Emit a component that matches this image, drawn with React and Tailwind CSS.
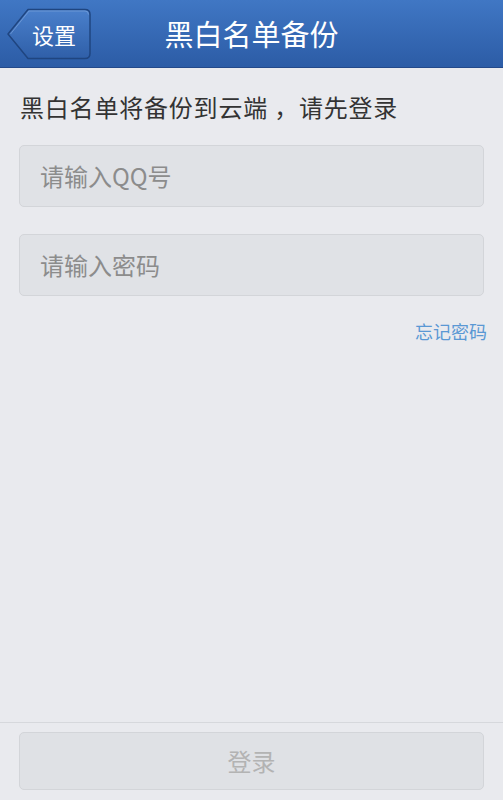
import React from "react";

const font = { fontFamily: '"Noto Sans CJK SC", "Noto Sans", "Liberation Sans", sans-serif' };

export default function App() {
  return (
    <div className="w-[503px] h-[800px] flex flex-col bg-[#e9eaee] overflow-hidden" style={font}>
      <div className="h-[68px] shrink-0 flex items-center relative bg-gradient-to-b from-[#4077c4] to-[#2c5ca6] border-b border-[#23498a]">
        <button className="relative ml-[6px] w-[86px] h-[54px] flex items-center justify-center">
          <svg className="absolute inset-0" width="86" height="54" viewBox="0 0 86 54">
            <defs>
              <linearGradient id="bb" x1="0" y1="0" x2="0" y2="1">
                <stop offset="0" stopColor="#4a80cc" />
                <stop offset="1" stopColor="#2f5fa8" />
              </linearGradient>
            </defs>
            <path d="M2 27 L22 2.5 H79 Q84 2.5 84 7.5 V46.5 Q84 51.5 79 51.5 H22 Z" fill="url(#bb)" stroke="#1f4580" strokeWidth="1.5" strokeLinejoin="round" />
            <path d="M4.5 27 L23 4 H79 Q82.5 4 82.5 7.5" fill="none" stroke="#7aa3dc" strokeWidth="1" opacity="0.7" />
          </svg>
          <span className="relative text-white text-[22px] ml-[10px] leading-none">设置</span>
        </button>
        <div className="absolute inset-0 flex items-center justify-center pointer-events-none">
          <span className="text-white text-[29px] leading-none">黑白名单备份</span>
        </div>
      </div>
      <div className="flex-1 flex flex-col px-[19px]">
        <div className="mt-[27px] text-[24px] leading-none tracking-[0.8px] text-[#333] pl-[1px] whitespace-nowrap">黑白名单将备份到云端 ，请先登录</div>
        <div className="mt-[26px] h-[62px] rounded-[5px] bg-[#e0e2e6] border border-[#d3d5d9] flex items-center pl-[20px] text-[24px] text-[#8c8c8c]">请输入QQ号</div>
        <div className="mt-[27px] h-[62px] rounded-[5px] bg-[#e0e2e6] border border-[#d3d5d9] flex items-center pl-[20px] text-[24px] text-[#8c8c8c]">请输入密码</div>
        <div className="mt-[26px] flex justify-end -mr-[3px]">
          <span className="text-[18px] leading-none text-[#5a98d4]">忘记密码</span>
        </div>
      </div>
      <div className="h-[78px] shrink-0 border-t border-[#d6d8dc] px-[19px] pt-[9px]">
        <div className="h-[58px] rounded-[5px] bg-[#dfe1e5] border border-[#d3d5d9] flex items-center justify-center text-[24px] text-[#b3b3b3]">登录</div>
      </div>
    </div>
  );
}
